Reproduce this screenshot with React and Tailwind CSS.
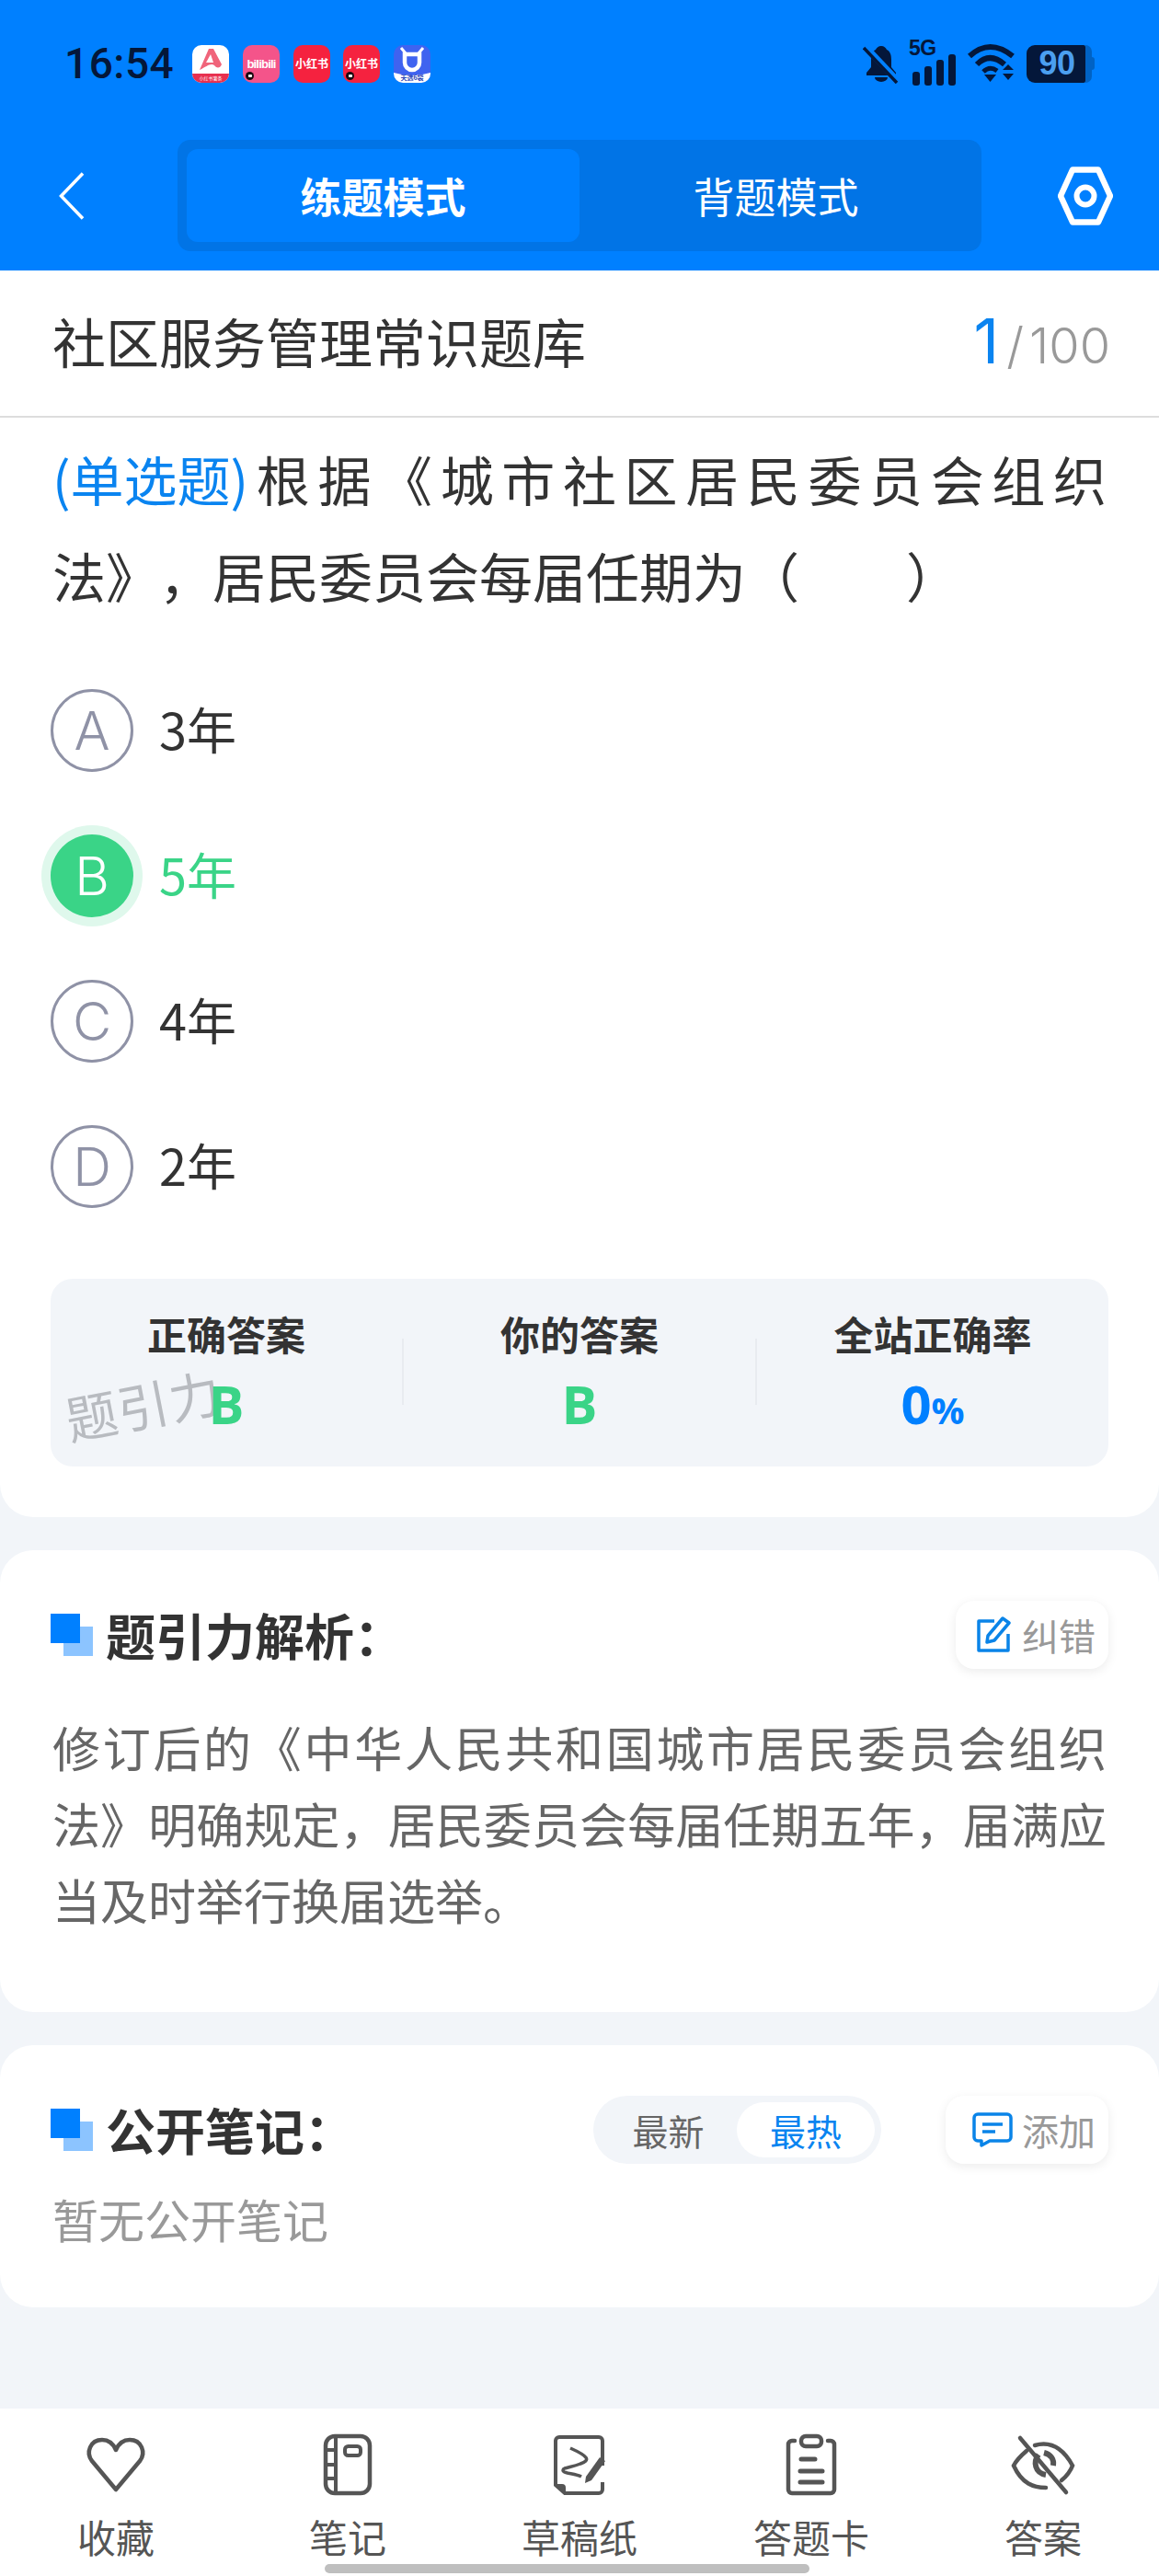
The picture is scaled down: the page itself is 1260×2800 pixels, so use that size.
import React from "react";

const cjk = { fontFamily: '"Noto Sans CJK SC","Noto Sans",sans-serif' };

function AppIcon({ children, bg, dot }) {
  return (
    <div className={`relative w-[40px] h-[41px] rounded-[10px] overflow-hidden flex items-center justify-center shrink-0 ${bg}`}>
      {children}
      {dot && (
        <span className="absolute left-[3px] bottom-[3px] w-[9px] h-[9px] rounded-full bg-[#1a0a10] flex items-center justify-center">
          <span className="w-[4px] h-[3px] bg-white rounded-[1px]" />
        </span>
      )}
    </div>
  );
}

function StatusIcons() {
  return (
    <div className="flex items-center">
      <AppIcon bg="bg-white">
        <svg viewBox="0 0 40 41" className="absolute inset-0 w-full h-full">
          <path d="M0 31h40v4a6 6 0 0 1 -6 6H6a6 6 0 0 1 -6-6z" fill="#e8304f" />
          <path d="M8 27 L18 4 h5 L32 21 c-2 5-6 4-8 1 c-4-3-8 1-16 5z" fill="#f0647a" />
          <path d="M15 19 L20 10 L23 19z" fill="#fff" />
        </svg>
        <span className="absolute bottom-[1px] text-[5px] leading-[8px] text-white whitespace-nowrap">小红书薯条</span>
      </AppIcon>
      <div className="w-[15px]" />
      <AppIcon bg="bg-[#f4548a]" dot>
        <span className="text-[13px] leading-none font-bold text-white tracking-[-0.8px]" style={{ fontFamily: '"Liberation Sans",sans-serif' }}>bilibili</span>
      </AppIcon>
      <div className="w-[15px]" />
      <AppIcon bg="bg-[#f5223f]">
        <span className="text-[12px] leading-none font-bold text-white whitespace-nowrap">小红书</span>
      </AppIcon>
      <div className="w-[14px]" />
      <AppIcon bg="bg-[#f5223f]" dot>
        <span className="text-[12px] leading-none font-bold text-white whitespace-nowrap">小红书</span>
      </AppIcon>
      <div className="w-[15px]" />
      <AppIcon bg="bg-[#3f63f0]">
        <svg viewBox="0 0 40 41" className="absolute inset-0 w-full h-full">
          <path d="M0 30 Q20 36 40 30 V35a6 6 0 0 1 -6 6H6a6 6 0 0 1 -6-6z" fill="#fff" />
          <path d="M12 10h16v9a8 8 0 0 1-16 0z" fill="none" stroke="#fff" strokeWidth="4.5" />
          <path d="M8 3l5 6M32 3l-5 6" stroke="#fff" strokeWidth="3" />
        </svg>
        <span className="absolute bottom-[1px] text-[7px] leading-[9px] font-bold text-[#2c47b8] whitespace-nowrap">天选6袋</span>
      </AppIcon>
    </div>
  );
}

function SysIcons() {
  return (
    <div className="flex items-center">
      <svg viewBox="0 0 40 44" className="w-[40px] h-[44px]">
        <path d="M20 3c-3 0-5 2-6 4c-4 2-5 6-5 11v8l-5 6v3h32v-3l-5-6v-8c0-5-1-9-5-11c-1-2-3-4-6-4z" fill="#04173a" />
        <path d="M13 37a7 5 0 0 0 14 0z" fill="#04173a" />
        <path d="M2 3 L38 41" stroke="#0080ff" strokeWidth="7" />
        <path d="M1 5 L37 43" stroke="#04173a" strokeWidth="3.5" />
      </svg>
      <div className="relative w-[50px] h-[48px] ml-[11px]">
        <span className="absolute -left-[1px] -top-[6px] text-[23px] leading-[26px] font-bold text-[#04173a] tracking-[-0.5px]" style={{ fontFamily: '"Liberation Sans",sans-serif' }}>5G</span>
        <svg viewBox="0 0 50 48" className="absolute inset-0 w-full h-full">
          <rect x="3" y="33" width="8" height="15" rx="3" fill="#04173a" />
          <rect x="16" y="27" width="8" height="21" rx="3" fill="#04173a" />
          <rect x="29" y="20" width="8" height="28" rx="3" fill="#04173a" />
          <rect x="42" y="14" width="8" height="34" rx="3" fill="#04173a" />
        </svg>
      </div>
      <svg viewBox="0 0 54 44" className="w-[54px] h-[44px] ml-[12px]">
        <path d="M3 14 Q25 -6 50 14" fill="none" stroke="#04173a" strokeWidth="6" />
        <path d="M11 23 Q25 9 41 23" fill="none" stroke="#04173a" strokeWidth="6" />
        <path d="M18 31 Q25 24 33 30" fill="none" stroke="#04173a" strokeWidth="5" />
        <path d="M19 34h13l-6.5 8z" fill="#04173a" />
        <path d="M39 29l6-6l6 6zM39 33h12l-6 7z" fill="#04173a" />
      </svg>
      <div className="flex items-center ml-[11px]">
        <div className="w-[64px] h-[41px] bg-[#04173a] rounded-l-[9px] rounded-r-[2px] flex items-center justify-center">
          <span className="text-[36px] leading-none font-bold text-[#4b9ff0] pl-[2px] tracking-[-0.5px]" style={{ fontFamily: '"Liberation Sans",sans-serif' }}>90</span>
        </div>
        <div className="w-[7px] h-[41px] bg-[#0062c4] rounded-r-[7px]" />
        <div className="w-[3px] h-[14px] bg-[#0062c4] rounded-r-[3px]" />
      </div>
    </div>
  );
}

function Header() {
  return (
    <header className="h-[294px] bg-[#0080ff] shrink-0 flex flex-col">
      <div className="h-[152px] pt-[45px] pl-[70px] pr-[70px] flex items-start justify-between">
        <div className="flex items-center h-[48px]">
          <span className="text-[46px] leading-none font-medium text-[#04173a] w-[139px] tracking-[0.5px]" style={{ fontFamily: 'Roboto,sans-serif' }}>16:54</span>
          <StatusIcons />
        </div>
        <div className="h-[48px] flex items-center">
          <SysIcons />
        </div>
      </div>
      <div className="flex items-start pl-[64px] pr-[45px]">
        <svg viewBox="0 0 28 52" className="w-[28px] h-[52px] mt-[35px] shrink-0">
          <path d="M26 1.5 L2.5 26 L26 50.5" fill="none" stroke="#fff" strokeWidth="3.5" />
        </svg>
        <div className="ml-[101px] w-[874px] h-[121px] bg-[#0174e6] rounded-[14px] p-[10px] flex">
          <div className="w-[427px] h-[101px] bg-[#0080ff] rounded-[12px] flex items-center justify-center text-[45px] font-bold text-white">练题模式</div>
          <div className="flex-1 flex items-center justify-center text-[45px] text-white">背题模式</div>
        </div>
        <svg viewBox="0 0 60 64" className="w-[60px] h-[64px] mt-[29px] ml-[83px] shrink-0">
          <path d="M16 3.5 H44 L57 32 L44 60.5 H16 L3 32 Z" fill="none" stroke="#fff" strokeWidth="6.5" strokeLinejoin="round" />
          <circle cx="30" cy="32" r="9.5" fill="none" stroke="#fff" strokeWidth="6" />
        </svg>
      </div>
    </header>
  );
}

function Option({ letter, text, selected }) {
  return (
    <div className="h-[158px] flex items-center px-[55px]">
      {selected ? (
        <div className="mt-[4px] w-[90px] h-[90px] rounded-full bg-[#3ad487] ring-[10px] ring-[#dff8ec] flex items-center justify-center text-[58px] text-white" style={{ fontFamily: 'Inter,sans-serif', fontWeight: 300 }}>{letter}</div>
      ) : (
        <div className="mt-[4px] w-[90px] h-[90px] rounded-full border-[3px] border-[#8f92a6] flex items-center justify-center text-[58px] text-[#8f92a6]" style={{ fontFamily: 'Inter,sans-serif', fontWeight: 300 }}>{letter}</div>
      )}
      <span className={`ml-[28px] text-[54px] leading-none ${selected ? "text-[#3ad487]" : "text-[#333333]"}`}>{text}</span>
    </div>
  );
}

function Stat({ label, value, blue, suffix }) {
  return (
    <div className="relative z-10 flex-1 flex flex-col items-center pt-[36px]">
      <div className="text-[43px] leading-[46px] font-bold text-[#333333]">{label}</div>
      <div className={`mt-[23px] text-[58px] leading-[62px] font-bold ${blue ? "text-[#0080ff]" : "text-[#3ad487]"}`} style={{ fontFamily: '"Open Sans",sans-serif' }}>
        {value}{suffix && <span className="text-[40px]">{suffix}</span>}
      </div>
    </div>
  );
}

function Squares() {
  return (
    <div className="relative w-[46px] h-[46px] shrink-0">
      <div className="absolute right-0 bottom-0 w-[32px] h-[32px] bg-[#8cc4ff]" />
      <div className="absolute left-0 top-0 w-[32px] h-[32px] bg-[#0080ff]" />
    </div>
  );
}

function MiniBtn({ icon, text, className }) {
  return (
    <div className={`h-[74px] rounded-[20px] bg-white shadow-[0_3px_12px_rgba(0,0,0,0.08)] flex items-center justify-end pr-[14px] gap-[10px] ${className}`}>
      {icon}
      <span className="text-[40px] text-[#999999]">{text}</span>
    </div>
  );
}

const iconCls = "w-[70px] h-[70px]";
const footerItems = [
  ["收藏", <svg viewBox="0 0 70 70" className={iconCls}><path d="M35 62 L9 31 C2 22 7 8 20 8 C27 8 32 12 35 19 C38 12 43 8 50 8 C63 8 68 22 61 31 Z" fill="none" stroke="#555" strokeWidth="4.5" strokeLinejoin="round" /></svg>],
  ["笔记", <svg viewBox="0 0 70 70" className={iconCls}><rect x="11" y="4" width="48" height="62" rx="10" fill="none" stroke="#555" strokeWidth="4.5" /><path d="M22 4v62M11 19h11M11 35h11M11 50h11" fill="none" stroke="#555" strokeWidth="4" /><rect x="32" y="15" width="17" height="10" rx="3.5" fill="none" stroke="#555" strokeWidth="4" /></svg>],
  ["草稿纸", <svg viewBox="0 0 70 70" className={iconCls}><path d="M60 36V9a4 4 0 0 0-4-4H13a4 4 0 0 0-4 4v48l10 9h37a4 4 0 0 0 4-4V54" fill="none" stroke="#555" strokeWidth="4" /><path d="M9 56h7a4 4 0 0 1 4 4v6z" fill="#555" /><path d="M25 17 C45 26 47 30 36 34 C26 38 17 38 17 41 C17 45 30 44 37 48" fill="none" stroke="#555" strokeWidth="3.5" /><path d="M42 48 L57 27 L63 31 L48 52 L41 55 Z" fill="#555" /></svg>],
  ["答题卡", <svg viewBox="0 0 70 70" className={iconCls}><path d="M17 9h-3a4 4 0 0 0-4 4v49a4 4 0 0 0 4 4h42a4 4 0 0 0 4-4V13a4 4 0 0 0-4-4h-3" fill="none" stroke="#555" strokeWidth="4.5" strokeLinecap="round" /><rect x="24" y="4" width="22" height="11" rx="5" fill="none" stroke="#555" strokeWidth="4.5" /><path d="M24 29h15M23 42h24M23 54h24" stroke="#555" strokeWidth="5" strokeLinecap="round" /></svg>],
  ["答案", <svg viewBox="0 0 70 70" className={iconCls}><path d="M17 20 C10 26 6 30 3 36 C12 56 25 60 38 60 M26 14 C40 10 55 14 67 36 C64 44 60 48 55 52" fill="none" stroke="#555" strokeWidth="4.5" strokeLinecap="round" /><path d="M30 24 C24 32 26 44 38 46 M36 22 C44 24 47 30 46 36" fill="none" stroke="#555" strokeWidth="6" /><path d="M10 6 L60 65" stroke="#555" strokeWidth="4.5" strokeLinecap="round" /></svg>],
];

export default function App() {
  return (
    <div className="relative w-[1260px] h-[2800px] bg-[#f2f5f9] flex flex-col overflow-hidden [text-spacing-trim:space-all]" style={cjk}>
      <Header />
      <main className="flex-1 flex flex-col gap-[36px]">
        <section className="bg-white rounded-b-[36px] pb-[55px]">
          <div className="h-[160px] border-b-2 border-[#dddddd] flex items-center justify-between pr-[53px] pl-[57px] pb-[6px]">
            <span className="text-[58px] leading-none text-[#333333]">社区服务管理常识题库</span>
            <span className="flex items-baseline text-[#999999] text-[54px] leading-none" style={{ fontFamily: 'Inter,sans-serif', fontWeight: 300 }}>
              <span className="text-[68px] text-[#0a84f0] mr-[8px] font-normal">1</span>/<span className="ml-[6px]">100</span>
            </span>
          </div>
          <div className="px-[57px] pt-[14px] text-[58px] leading-[105px] text-[#333333] text-justify">
            <span className="inline-block text-[#0a84f0]">(单选题)</span>根据《城市社区居民委员会组织法》，居民委员会每届任期为（　　）
          </div>
          <div className="mt-[35px]">
            <Option letter="A" text="3年" />
            <Option letter="B" text="5年" selected />
            <Option letter="C" text="4年" />
            <Option letter="D" text="2年" />
          </div>
          <div className="relative mx-[55px] mt-[45px] h-[204px] bg-[#f2f5f9] rounded-[24px] flex">
            <Stat label="正确答案" value="B" />
            <div className="w-[2px] h-[72px] bg-[#e8ebf0] mt-[65px]" />
            <Stat label="你的答案" value="B" />
            <div className="w-[2px] h-[72px] bg-[#e8ebf0] mt-[65px]" />
            <Stat label="全站正确率" value="0" suffix="%" blue />
            <span className="absolute left-[15px] top-[108px] text-[56px] leading-none tracking-[1px] text-[#b8bbc0] -rotate-[11deg]">题引力</span>
          </div>
        </section>

        <section className="bg-white rounded-[36px] px-[55px] pt-[55px] pb-[81px]">
          <div className="flex items-center justify-between">
            <div className="flex items-center">
              <Squares />
              <span className="ml-[14px] text-[54px] leading-none font-bold text-[#333333]">题引力解析：</span>
            </div>
            <MiniBtn
              className="w-[166px]"
              icon={
                <svg viewBox="0 0 40 42" className="w-[40px] h-[42px] shrink-0">
                  <path d="M20 6H3v32h32V20" fill="none" stroke="#0a84e8" strokeWidth="3.5" strokeLinejoin="round" />
                  <path d="M13 22 L29 3 L36 8 L20 27 L12 29 Z" fill="none" stroke="#0a84e8" strokeWidth="3.5" strokeLinejoin="round" />
                </svg>
              }
              text="纠错"
            />
          </div>
          <p className="mt-[43px] px-[2px] text-[52px] leading-[83px] text-[#666666] text-justify">
            修订后的《中华人民共和国城市居民委员会组织法》明确规定，居民委员会每届任期五年，届满应当及时举行换届选举。
          </p>
        </section>

        <section className="bg-white rounded-[36px] px-[55px] pt-[55px] pb-[55px]">
          <div className="flex items-center">
            <Squares />
            <span className="ml-[14px] text-[54px] leading-none font-bold text-[#333333]">公开笔记：</span>
            <div className="ml-auto w-[313px] h-[74px] rounded-full bg-[#f2f5f9] flex items-center p-[7px]">
              <span className="flex-1 text-center text-[39px] text-[#666666]">最新</span>
              <span className="w-[150px] h-[60px] rounded-full bg-white flex items-center justify-center text-[39px] text-[#0a84f0]">最热</span>
            </div>
            <MiniBtn
              className="w-[177px] ml-[70px]"
              icon={
                <svg viewBox="0 0 44 38" className="w-[44px] h-[38px] shrink-0">
                  <path d="M6 2h32a4 4 0 0 1 4 4v21a4 4 0 0 1-4 4H19l-9 5v-5H6a4 4 0 0 1-4-4V6a4 4 0 0 1 4-4z" fill="none" stroke="#0a84e8" strokeWidth="3.5" strokeLinejoin="round" />
                  <path d="M11 13h22M11 21h14" stroke="#0a84e8" strokeWidth="3.5" />
                </svg>
              }
              text="添加"
            />
          </div>
          <p className="mt-[17px] px-[2px] text-[50px] leading-[84px] text-[#999999]">暂无公开笔记</p>
        </section>
      </main>

      <footer className="h-[182px] bg-white grid grid-cols-5 shrink-0">
        {footerItems.map(([label, icon]) => (
          <div key={label} className="flex flex-col items-center pt-[26px]">
            {icon}
            <span className="mt-[17px] text-[42px] leading-[52px] text-[#555555]">{label}</span>
          </div>
        ))}
      </footer>
      <div className="absolute left-[353px] bottom-[3px] w-[527px] h-[10px] rounded-full bg-[#bfbfbf]" />
    </div>
  );
}
